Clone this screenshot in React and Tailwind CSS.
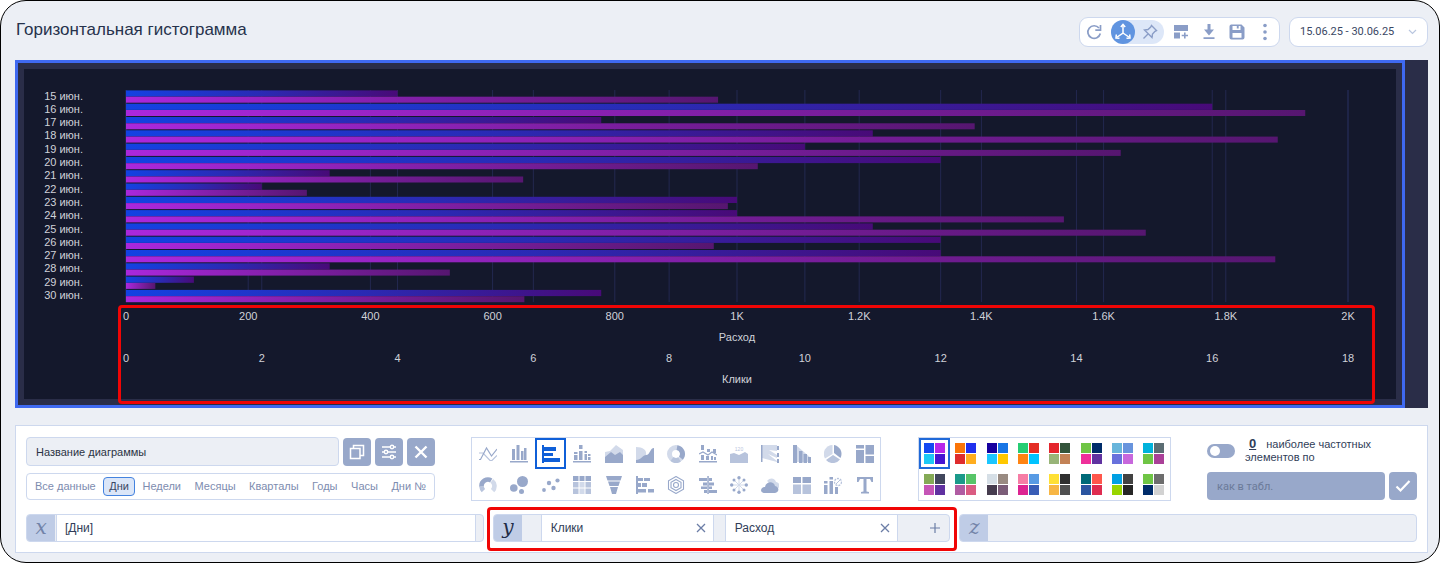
import React from "react";

const days = [
  ["15 июн.", 4, 969],
  ["16 июн.", 16, 1930],
  ["17 июн.", 7, 1389],
  ["18 июн.", 11, 1885],
  ["19 июн.", 10, 1628],
  ["20 июн.", 12, 1034],
  ["21 июн.", 3, 650],
  ["22 июн.", 2, 296],
  ["23 июн.", 9, 985],
  ["24 июн.", 9, 1535],
  ["25 июн.", 11, 1669],
  ["26 июн.", 12, 962],
  ["27 июн.", 12, 1881],
  ["28 июн.", 3, 530],
  ["29 июн.", 1, 48],
  ["30 июн.", 7, 652],
];

const costTicks = ["0", "200", "400", "600", "800", "1K", "1.2K", "1.4K", "1.6K", "1.8K", "2K"];
const clickTicks = ["0", "2", "4", "6", "8", "10", "12", "14", "16", "18"];

function Chart() {
  const pitch = 13.3;
  const top = 21.4;
  return (
    <svg className="block h-[330px] w-full overflow-visible text-[11px]" role="img" aria-label="Клики и Расход по дням">
      <defs>
        <linearGradient id="clicks">
          <stop offset="0" stopColor="#1342e2" />
          <stop offset="0.5" stopColor="#2a2ab4" />
          <stop offset="1" stopColor="#480a78" />
        </linearGradient>
        <linearGradient id="cost">
          <stop offset="0" stopColor="#aa28dc" />
          <stop offset="1" stopColor="#561670" />
        </linearGradient>
      </defs>
      {costTicks.map((t, i) => (
        <line key={t} x1={`${i * 10}%`} x2={`${i * 10}%`} y1="21" y2="233" stroke="#232850" />
      ))}
      {clickTicks.map((t, i) => (
        <line key={t} x1={`${(i * 100) / 9}%`} x2={`${(i * 100) / 9}%`} y1="21" y2="233" stroke="#232850" />
      ))}
      {days.map(([day, clicks, cost], i) => (
        <g key={day}>
          <text x="-43" y={30.5 + i * pitch} textAnchor="end" fill="#d0d2d9">{day}</text>
          <rect x="0" y={top + i * pitch} width={`${(clicks / 18) * 100}%`} height="6.2" fill="url(#clicks)" />
          <rect x="0" y={top + 6.3 + i * pitch} width={`${cost / 20}%`} height="6" fill="url(#cost)" />
        </g>
      ))}
      {costTicks.map((t, i) => (
        <text key={t} x={`${i * 10}%`} y="251" textAnchor="middle" fill="#d0d2d9">{t}</text>
      ))}
      <text x="50%" y="272" textAnchor="middle" fill="#d0d2d9">Расход</text>
      {clickTicks.map((t, i) => (
        <text key={t} x={`${(i * 100) / 9}%`} y="293" textAnchor="middle" fill="#d0d2d9">{t}</text>
      ))}
      <text x="50%" y="314" textAnchor="middle" fill="#d0d2d9">Клики</text>
    </svg>
  );
}

const A = "#98a8ca";
const B = "#b7c3dc";
const C = "#d2daea";

const chartTypes = [
  ["Линии", <g fill="none" strokeWidth="1.200"><path d="M0 8h4l7 7.500h2l5-5" stroke={B} /><path d="M0 14.500h1.500L7.500 3l5 8L18 4" stroke={A} /></g>],
  ["Столбцы", <path d="M0 16h18v1.500H0zM2 4h3v11H2zM6.500 0h3v15h-3zM11 6h2.500v9H11zM14 3h2.500v12H14z" fill={A} />],
  ["Горизонтальная гистограмма", <path d="M0 0h2v18H0zM2 2h12v4H2zM2 8h9v3H2zM2 13h16v4H2z" fill="#0f5fd8" />],
  ["Столбцы с накоплением", <path d="M0 16h18v1.500H0zM1 10h3.500v5H1zM1 7h3.500v2H1zM6 6h3.500v9H6zM6 0h3.500v4H6zM11.500 9H14v6h-2.500zM11.500 6H14v2h-2.500zM15 12h2.500v3H15zM15 9h2.500v2H15z" fill={A} />],
  ["Области", <g><path d="M0 12V7l5-1 6-6 7 5v8z" fill={C} /><path d="M0 18v-6l6-5 4 3 5-3 3 3v8z" fill={A} /></g>],
  ["Потоки", <g><path d="M0 2c7 0 11 3 10 8L0 18z" fill={C} /><path d="M0 18v-3c5 0 7-5 10-5 4 0 4-7 8-7v15z" fill={A} /></g>],
  ["Кольцо", <g fill="none" strokeWidth="5"><circle cx="9" cy="9" r="6.500" stroke={C} /><path d="M10 2.600A6.500 6.500 0 0 1 14 13.100" stroke={A} /><path d="M12.500 14.500A6.500 6.500 0 0 1 5 14" stroke={B} /></g>],
  ["Столбцы и линии", <g><path d="M0 16h18v1.500H0zM2 10h3v5H2zM2 0h3v5H2zM7 11h3v4H7zM8 4h3v3H8zM12 11h2v4h-2zM14 4h3v4h-3zM15 12h2v3h-2z" fill={A} /><path d="M0 9l4-2 5 3 4-3 5 3" fill="none" stroke={A} strokeWidth="1.300" /></g>],
  ["Показатель с областью", <g><path d="M0 18V9l4-1 5 2 6-3 3 2v9z" fill={B} /><text x="9" y="6" textAnchor="middle" fontSize="5" fill={B}>120</text></g>],
  ["Потоковая диаграмма", <g><path d="M1 0h15v6l-8-1 8 5v3L7 9l9 7v1L1 13z" fill={C} /><path d="M0 0h1.500v17H0zM16 1h2v4h-2zM16 8h2v4h-2zM16 14h2v4h-2z" fill={A} /></g>],
  ["Убывание", <g><path d="M4 1l14 12v4H4z" fill={C} /><path d="M0 0h4v18H0zM6 6h3.500v12H6zM10.500 9H14v9h-3.500zM15 12h3v6h-3z" fill={A} /></g>],
  ["Круговая", <g><path d="M8.500 9V0A9 9 0 0 0 1 13.500z" fill={C} /><path d="M10 8V0a9 9 0 0 1 6.500 13z" fill={A} /><path d="M9 10l7 4.500A9 9 0 0 1 2 15z" fill={B} /></g>],
  ["Плитки", <path d="M0 0h8v3.500H0zM0 5h8v13H0zM9.500 0H18v9.500H9.500zM9.500 11H18v7H9.500z" fill={A} />],
  ["Спидометр", <g fill="none" strokeWidth="4.600"><path d="M12.800 4.800A6.500 6.500 0 0 1 13.600 14.600" stroke={C} /><path d="M4.400 14.600A6.500 6.500 0 0 1 2.600 10.500" stroke={B} /><path d="M2.500 10.500A6.500 6.500 0 0 1 12.200 4.400" stroke={A} /></g>],
  ["Пузырьки", <g fill={A}><circle cx="12.500" cy="5.500" r="5.500" /><circle cx="3.800" cy="12" r="3.800" /><circle cx="11.500" cy="15.500" r="2.500" /></g>],
  ["Точки", <g fill={A}><circle cx="2" cy="14" r="1.900" /><circle cx="7" cy="7" r="2.200" /><circle cx="11.500" cy="12" r="2.200" /><circle cx="15.500" cy="4.500" r="2.100" /></g>],
  ["Тепловая карта", <g><path d="M0 0h5.500v5H0zM12.500 0H18v5h-5.500zM6.500 0h5v5h-5z" fill={A} /><path d="M0 6h5.500v5.500H0zM12.500 6H18v5.500h-5.500zM0 12.500h5.500V18H0zM12.500 12.500H18V18h-5.500z" fill={B} /><path d="M6.500 6h5v5.500h-5zM6.500 12.500h5V18h-5z" fill={C} /></g>],
  ["Воронка", <path d="M1 0h16l-1.500 4.500h-13zM3 5.500h12L13.500 10h-9zM5 11h8l-2 7H7z" fill={A} />],
  ["Полосы с накоплением", <path d="M0 0h2v18H0zM2 2h5v3H2zM8 2h6v3H8zM2 7h3v4H2zM6 7h5v4H6zM2 13h8v3.500H2zM12 13h6v3.500h-6z" fill={A} />],
  ["Радар", <g fill="none" stroke={A} strokeWidth="1.100"><path d="M9 .5l7.500 4.200v8.600L9 17.500l-7.500-4.200V4.700z" /><path d="M9 3.500l5 2.800v5.400l-5 2.800-5-2.800V6.300z" /><circle cx="9" cy="9" r="2.500" /></g>],
  ["Торнадо", <path d="M8.300 0h1.500v18H8.300zM0 2h8v3H0zM10 2h3v3h-3zM4 6.500h4v3H4zM10 6.500h5v3h-5zM2 10.500h6V13H2zM10 10.500h3V13h-3zM5 14h3v3H5zM10 14h8v3h-8z" fill={A} />],
  ["Граф", <g><path d="M9 2v14M2 9h14M4 4l10 10M14 4L4 14" stroke={C} strokeWidth="1" /><g fill={A}><circle cx="9" cy="1.700" r="1.700" /><circle cx="9" cy="16.300" r="1.700" /><circle cx="1.700" cy="9" r="1.700" /><circle cx="16.300" cy="9" r="1.700" /><circle cx="4" cy="4" r="1.500" /><circle cx="14" cy="4" r="1.500" /><circle cx="4" cy="14" r="1.500" /><circle cx="14" cy="14" r="1.500" /></g></g>],
  ["Облако слов", <g><path d="M6 5c3-4 8-3 9 1 5 1 4 6 1 7z" fill={C} /><path d="M3 17c-5-1-3-6 1-6 1-6 9-6 10-1 5 1 4 7 0 7z" fill={A} /></g>],
  ["Таблица", <g><path d="M0 1h8v6H0zM9.500 1H18v6H9.500z" fill={A} /><path d="M0 8.500h8V18H0zM9.500 8.500H18V18H9.500z" fill={B} /></g>],
  ["Комбинированная", <g><path d="M0 9h3.500v9H0zM0 5h3.500v2.500H0zM5.500 5H9v13H5.500zM5.500 1H9v2.500H5.500zM11 11h3v7h-3z" fill={A} /><circle cx="14" cy="6" r="3.500" fill="none" stroke={B} strokeWidth="1.300" strokeDasharray="2 1" /><path d="M12 8l4-4" stroke={B} /></g>],
  ["Текст", <path d="M1 1h16v5h-1.500L14 3h-3.500v12.500L13 16v1.500H5V16l2.500-.5V3H4L2.500 6H1z" fill={A} />],
];

const palettes = [
  ["bg-[#1549f2]", "bg-[#b827ea]", "bg-[#1cc9f5]", "bg-[#4616d2]"],
  ["bg-[#fb7507]", "bg-[#2030ee]", "bg-[#df2c2d]", "bg-[#ffad1f]"],
  ["bg-[#16009f]", "bg-[#1875e5]", "bg-[#1bc6ff]", "bg-[#ffc800]"],
  ["bg-[#26cd73]", "bg-[#e42e25]", "bg-[#ff8413]", "bg-[#00c3ff]"],
  ["bg-[#e4252d]", "bg-[#34543b]", "bg-[#98b478]", "bg-[#c38256]"],
  ["bg-[#6fc545]", "bg-[#002c6a]", "bg-[#ee309a]", "bg-[#6032a0]"],
  ["bg-[#68b5db]", "bg-[#6894dd]", "bg-[#6871dc]", "bg-[#c767dc]"],
  ["bg-[#00b2db]", "bg-[#5b6d73]", "bg-[#6fc545]", "bg-[#aa4098]"],
  ["bg-[#84aa56]", "bg-[#41475d]", "bg-[#c555b6]", "bg-[#6031a0]"],
  ["bg-[#1b9a8a]", "bg-[#57c568]", "bg-[#b05ca2]", "bg-[#da5c82]"],
  ["bg-[#d6dfe6]", "bg-[#998b82]", "bg-[#463c4e]", "bg-[#7b5d78]"],
  ["bg-[#f67da5]", "bg-[#589be4]", "bg-[#dd2491]", "bg-[#395db6]"],
  ["bg-[#ffe034]", "bg-[#303030]", "bg-[#f7b644]", "bg-[#505050]"],
  ["bg-[#006a78]", "bg-[#ff574c]", "bg-[#2b55a0]", "bg-[#df2c50]"],
  ["bg-[#00a0e3]", "bg-[#424242]", "bg-[#98d500]", "bg-[#262626]"],
  ["bg-[#6fc545]", "bg-[#6d6d6d]", "bg-[#002c6a]", "bg-[#d2d2d2]"],
];

const periods = ["Все данные", "Дни", "Недели", "Месяцы", "Кварталы", "Годы", "Часы", "Дни №"];

const squareButton = "flex h-7 w-7 shrink-0 items-center justify-center rounded-[4px] bg-[#98a8ca] text-white";

function Toolbar() {
  return (
    <div className="flex h-[30px] items-center rounded-[9px] border border-[#cdd8ee] bg-white px-[5px] text-[#8a9dc7]">
      <button aria-label="Обновить" className="flex h-6 w-[18px] items-center justify-center">
        <svg width="16" height="16" viewBox="0 0 16 16" fill="none" stroke="currentColor" strokeWidth="1.700"><path d="M13 4A6.300 6.300 0 1 0 14.300 9.500" /><path d="M14.500 1v5.200H9.300" /></svg>
      </button>
      <div className="ml-2 flex h-6 items-center rounded-full bg-[#dde7f8]">
        <button aria-label="Оси" className="flex h-6 w-6 items-center justify-center rounded-full bg-[#6094e0]">
          <svg width="18" height="18" viewBox="0 0 18 18" fill="none" stroke="#fff" strokeWidth="1.500"><path d="M9 2v8l-6.500 4.500M9 10l6.500 4.500" /><path d="M6.800 4L9 1.500 11.200 4M2.300 11.500L2 15l3.500.3M15.700 11.500L16 15l-3.500.3" /></svg>
        </button>
        <button aria-label="Закрепить" className="flex h-6 w-[29px] items-center justify-center">
          <svg width="16" height="16" viewBox="0 0 16 16" fill="none" stroke="currentColor" strokeWidth="1.400"><path d="M9.500 1.500l5 5-1.500.8-2.500 2.700-.5 3.500L2.500 6 6 5.500 8.700 3zM6 10l-4.500 4.500" /></svg>
        </button>
      </div>
      <button aria-label="Добавить блок" className="ml-2 flex h-6 w-[18px] items-center justify-center">
        <svg width="16" height="16" viewBox="0 0 16 16" fill="currentColor"><path d="M1 1h14v6H1zM1 8.500h6v6H1zM11 8.500h1.600v2.200h2.400v1.600h-2.400v2.200H11v-2.200H8.700v-1.600H11z" /></svg>
      </button>
      <button aria-label="Скачать" className="ml-[10px] flex h-6 w-[18px] items-center justify-center">
        <svg width="16" height="16" viewBox="0 0 16 16" fill="currentColor"><path d="M6.500 0h3v5.500h3.500L8 11.500 3 5.500h3.500zM2.500 13.300h11V15h-11z" /></svg>
      </button>
      <button aria-label="Сохранить" className="ml-[10px] flex h-6 w-[18px] items-center justify-center">
        <svg width="16" height="16" viewBox="0 0 16 16" fill="currentColor"><path fillRule="evenodd" d="M2 .5h10.500l3 3V13.500a2 2 0 0 1-2 2h-11a2 2 0 0 1-2-2v-11a2 2 0 0 1 1.500-2zM3.500 2v4h8V2h-1.800v2.500H7.800V2zM3.500 9v4.800h9V9z" /></svg>
      </button>
      <button aria-label="Ещё" className="ml-[10px] flex h-6 w-[18px] items-center justify-center">
        <svg width="16" height="18" viewBox="0 0 16 18" fill="currentColor"><circle cx="8" cy="2.500" r="1.800" /><circle cx="8" cy="9" r="1.800" /><circle cx="8" cy="15.500" r="1.800" /></svg>
      </button>
    </div>
  );
}

function AxisBadge({ children, active }) {
  return (
    <span className={`flex w-7 shrink-0 items-center justify-center bg-[#bfcce6] font-['DejaVu_Math_TeX_Gyre','DejaVu_Serif',serif] text-[20px] leading-[20px] ${active ? "text-[#1f2c47]" : "text-[#7283a8]"}`}>
      {children}
    </span>
  );
}

function Measure({ name }) {
  return (
    <div className="flex w-[173px] items-center justify-between border-x border-[#cdd8ee] bg-white pl-[9px] pr-[7px]">
      <span>{name}</span>
      <button aria-label={`Удалить ${name}`}>
        <svg width="10" height="10" viewBox="0 0 10 10" fill="none" stroke="#6b7da6" strokeWidth="1.300"><path d="M1 1l8 8M9 1L1 9" /></svg>
      </button>
    </div>
  );
}

export default function App() {
  return (
    <div className="bg-white font-['Liberation_Sans',Arial,sans-serif] text-[12px] text-[#303d58]">
      <div className="rounded-[26px] border border-black bg-[#eceff5] pb-[9px] pl-[14px] pr-[11px] pt-4">
        <header className="flex items-center justify-between">
          <h1 className="-mt-1 pl-px text-[17px] leading-6 text-[#26324c]">Горизонтальная гистограмма</h1>
          <div className="flex gap-[9px]">
            <Toolbar />
            <button className="flex h-[30px] w-[139px] items-center justify-between rounded-[9px] border border-[#cdd8ee] bg-white px-[10px] font-['Roboto',sans-serif] text-[11px] text-[#3a4763]">
              15.06.25 - 30.06.25
              <svg width="9" height="6" viewBox="0 0 9 6" fill="none" stroke="#b9c6df" strokeWidth="1.200"><path d="M1 1l3.500 3.500L8 1" /></svg>
            </button>
          </div>
        </header>

        <section className="mt-[13px] bg-[#2a2d48] pr-[23px]">
          <div className="border-[3px] border-[#3f69f0] p-[6px]">
            <div className="relative bg-[#14182c] pl-[102px] pr-12">
              <Chart />
              <div className="pointer-events-none absolute -bottom-[5px] left-[94px] right-[21px] top-[236px] rounded-[4px] border-[3px] border-[#f00505]" />
            </div>
          </div>
        </section>

        <section className="mt-[17px] border border-[#cdd8ee] bg-white px-[10px] pb-[10px] pt-[11px]">
          <div className="flex items-start justify-between">
            <div className="w-[409px]">
              <div className="flex items-center gap-1">
                <input aria-label="Название диаграммы" defaultValue="Название диаграммы" className="h-[29px] min-w-0 flex-1 rounded-[4px] border border-[#cdd8ee] bg-[#eceff5] px-[9px] text-[11px] text-[#2b3344]" />
                <button aria-label="Копировать" className={squareButton}>
                  <svg width="16" height="16" viewBox="0 0 16 16" fill="none" stroke="#fff" strokeWidth="1.500"><path d="M1.500 4.500h9.500v10H1.500zM4.500 4V1.500h10v10H11.500" /></svg>
                </button>
                <button aria-label="Настройки" className={squareButton}>
                  <svg width="16" height="16" viewBox="0 0 16 16" fill="#98a8ca" stroke="#fff" strokeWidth="1.400"><path d="M1 3h14M1 8h14M1 13h14" /><circle cx="11" cy="3" r="1.700" /><circle cx="5" cy="8" r="1.700" /><circle cx="11" cy="13" r="1.700" /></svg>
                </button>
                <button aria-label="Закрыть" className={squareButton}>
                  <svg width="14" height="14" viewBox="0 0 14 14" stroke="#fff" strokeWidth="2.400"><path d="M1.500 1.500l11 11M12.500 1.500l-11 11" /></svg>
                </button>
              </div>
              <div className="mt-[7px] flex h-[27px] items-center justify-between rounded-[4px] border border-[#cdd8ee] px-[2px] text-[11px] text-[#7d8caf]">
                {periods.map((p) => (
                  <button key={p} className={`h-[19px] whitespace-nowrap rounded-[4px] border px-[5px] leading-[17px] ${p === "Дни" ? "border-[#4483df] bg-[#dbe6f8] text-[#3a4763]" : "border-transparent"}`}>
                    {p}
                  </button>
                ))}
              </div>
            </div>

            <div className="grid w-[410px] grid-cols-13 border border-[#cdd8ee]">
              {chartTypes.map(([name, icon], i) => (
                <button key={name} aria-label={name} className={`flex h-[31px] items-center justify-center border-2 ${i === 2 ? "border-[#0f5fd8]" : "border-transparent"}`}>
                  <svg width="18" height="18" viewBox="0 0 18 18" className="shrink-0">{icon}</svg>
                </button>
              ))}
            </div>

            <div className="grid w-[253px] grid-cols-8 border border-[#cdd8ee]">
              {palettes.map((colors, i) => (
                <button key={i} aria-label={`Палитра ${i + 1}`} className={`flex h-[31px] items-center justify-center border-2 ${i === 0 ? "border-[#1f69d8]" : "border-transparent"}`}>
                  <span className="grid grid-cols-2 gap-px">
                    {colors.map((c, k) => (
                      <span key={k} className={`h-[10px] w-[10px] ${c}`} />
                    ))}
                  </span>
                </button>
              ))}
            </div>

            <div className="w-[210px]">
              <div className="flex items-start gap-[10px] text-[11px] leading-[13px]">
                <label className="relative mt-[7px] flex">
                  <input type="checkbox" aria-label="Только наиболее частотные" className="peer h-[14px] w-7 appearance-none rounded-full bg-[#98a8ca]" />
                  <span className="pointer-events-none absolute left-[3px] top-[2px] h-[10px] w-[10px] rounded-full bg-white peer-checked:left-[15px]" />
                </label>
                <p>
                  <button className="ml-1 mr-[10px] text-[13px] font-bold leading-[13px] underline">0</button>
                  наиболее частотных
                  <br />
                  элементов по
                </p>
              </div>
              <div className="mt-2 flex gap-1">
                <input aria-label="Порядок элементов" disabled placeholder="как в табл." className="h-7 min-w-0 flex-1 rounded-[4px] bg-[#98a8ca] px-[10px] font-['Roboto',sans-serif] text-[11px] placeholder:text-[#6b7a99]" />
                <button aria-label="Применить" className={squareButton}>
                  <svg width="16" height="14" viewBox="0 0 16 14" fill="none" stroke="#fff" strokeWidth="2.200"><path d="M1.500 7.500l4 4L14.500 2" /></svg>
                </button>
              </div>
            </div>
          </div>

          <div className="mt-[13px] grid grid-cols-3 gap-[9px]">
            <div className="flex h-7 overflow-hidden rounded-[4px] border border-[#cdd8ee] bg-[#eceff5]">
              <AxisBadge>𝑥</AxisBadge>
              <input aria-label="Ось X" defaultValue="[Дни]" className="ml-px mr-[7px] min-w-0 flex-1 border-x border-[#cdd8ee] bg-white px-2 text-[12px] text-[#303d58]" />
            </div>
            <div className="relative">
              <div className="flex h-7 overflow-hidden rounded-[4px] border border-[#cdd8ee] bg-[#eceff5]">
                <AxisBadge active>𝑦</AxisBadge>
                <div className="ml-[19px] flex gap-[11px]">
                  <Measure name="Клики" />
                  <Measure name="Расход" />
                </div>
                <button aria-label="Добавить показатель" className="ml-auto mr-[9px]">
                  <svg width="10" height="10" viewBox="0 0 10 10" stroke="#6b7da6" strokeWidth="1.200"><path d="M5 0v10M0 5h10" /></svg>
                </button>
              </div>
              <div className="pointer-events-none absolute -bottom-[9px] -left-[6px] -right-[7px] -top-[7px] rounded-[4px] border-[3px] border-[#f00505]" />
            </div>
            <div className="flex h-7 overflow-hidden rounded-[4px] border border-[#cdd8ee] bg-[#eceff5]">
              <AxisBadge>𝑧</AxisBadge>
              <input aria-label="Ось Z" className="min-w-0 flex-1 bg-transparent px-2" />
            </div>
          </div>
        </section>
      </div>
    </div>
  );
}
